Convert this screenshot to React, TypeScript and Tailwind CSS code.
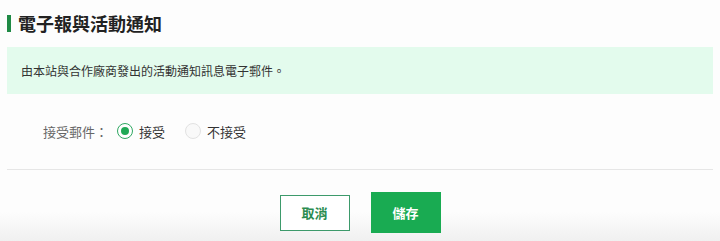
import { useState } from "react";

const cjk = "font-['Noto_Sans_CJK_TC','Noto_Sans_CJK_SC',sans-serif]";

function Radio({ checked, label, onSelect }: { checked: boolean; label: string; onSelect: () => void }) {
  return (
    <label className="flex cursor-pointer items-center gap-[6px]" onClick={onSelect}>
      <span
        className={
          checked
            ? "flex h-[16px] w-[16px] items-center justify-center rounded-full border border-[#2fa862] bg-white"
            : "flex h-[16px] w-[16px] items-center justify-center rounded-full border border-[#e2e2e2] bg-[#f9f9f9]"
        }
      >
        {checked && <span className="h-[8px] w-[8px] rounded-full bg-[#1fa955]" />}
      </span>
      <span className="text-[13px] leading-none text-[#333]">{label}</span>
    </label>
  );
}

export default function App() {
  const [accept, setAccept] = useState(true);

  return (
    <div
      className={`${cjk} flex h-[241px] w-[720px] flex-col bg-[linear-gradient(to_bottom,#fdfdfd_212px,#f0f0f0_241px)]`}
    >
      <div className="mt-[11px] flex h-[24px] items-center gap-[7px] px-[7px]">
        <span className="h-[17px] w-[4px] bg-[#1f8a45]" />
        <h2 className="text-[18px] font-bold leading-none text-[#222]">電子報與活動通知</h2>
      </div>

      <div className="mx-[7px] mt-[12px] flex h-[47px] items-center bg-[#e3fbed] pl-[14px]">
        <p className="text-[12px] text-[#333]">由本站與合作廠商發出的活動通知訊息電子郵件。</p>
      </div>

      <div className="mt-[27px] flex h-[20px] items-center pl-[43px]">
        <span className="w-[74px] text-[13px] leading-none text-[#666]">接受郵件：</span>
        <div className="flex items-center gap-[20px]">
          <Radio checked={accept} label="接受" onSelect={() => setAccept(true)} />
          <Radio checked={!accept} label="不接受" onSelect={() => setAccept(false)} />
        </div>
      </div>

      <div className="mx-[7px] mt-[28px] h-px bg-[#e6e6e6]" />

      <div className="mt-[22px] flex items-center justify-center gap-[21px]">
        <button className="h-[36px] w-[70px] border border-[#3d9a6b] bg-white text-[13px] font-bold text-[#2b8c50]">
          取消
        </button>
        <button className="h-[41px] w-[70px] bg-[#19ab52] text-[13px] font-bold text-white">儲存</button>
      </div>
    </div>
  );
}
